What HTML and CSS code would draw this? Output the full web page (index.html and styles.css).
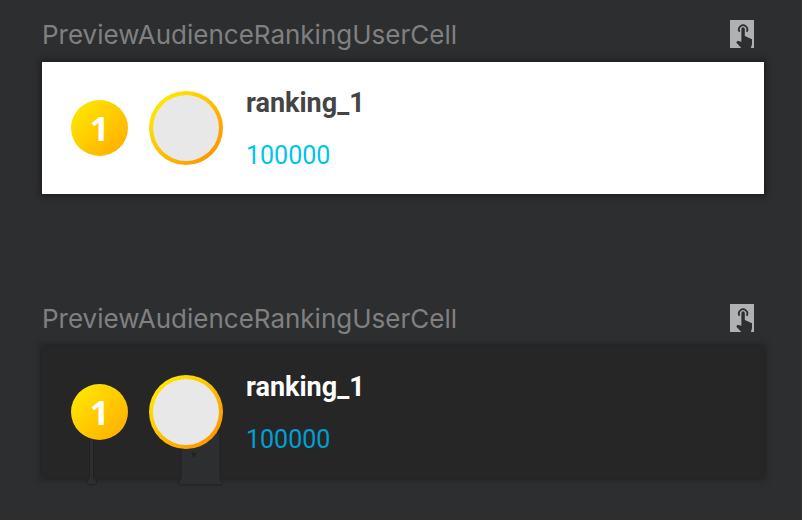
FILE: index.html
```html
<!DOCTYPE html>
<html lang="en">
<head>
  <meta charset="UTF-8" />
  <title>PreviewAudienceRankingUserCell</title>
  <link rel="stylesheet" href="styles.css">
</head>
<body>
  <section class="preview">
    <header class="preview-header">
      <h2>PreviewAudienceRankingUserCell</h2>
      <button class="interactive" aria-label="Interactive mode">
        <svg viewBox="0 0 24 28" width="24" height="28">
          <path d="M9.600 11.800a4.200 4.200 0 1 1 7 0" fill="none" stroke="#2d2e30" stroke-width="1.800" />
          <path d="M11.400 9a1.700 1.700 0 0 1 3.400 0v7l7.200 3.200v5l-1.200 3.800h-9.500L6.200 22.400l1.500-1.600 3.700 1z" fill="#2d2e30" />
        </svg>
      </button>
    </header>
    <div class="cell">
      <div class="rank">1</div>
      <div class="avatar"></div>
      <div class="info">
        <div class="name">ranking_1</div>
        <div class="score">100000</div>
      </div>
    </div>
  </section>

  <section class="preview">
    <header class="preview-header">
      <h2>PreviewAudienceRankingUserCell</h2>
      <button class="interactive" aria-label="Interactive mode">
        <svg viewBox="0 0 24 28" width="24" height="28">
          <path d="M9.600 11.800a4.200 4.200 0 1 1 7 0" fill="none" stroke="#2d2e30" stroke-width="1.800" />
          <path d="M11.400 9a1.700 1.700 0 0 1 3.400 0v7l7.200 3.200v5l-1.200 3.800h-9.500L6.200 22.400l1.500-1.600 3.700 1z" fill="#2d2e30" />
        </svg>
      </button>
    </header>
    <div class="cell dark">
      <!-- background showing through under the circles -->
      <svg class="cutouts" viewBox="0 0 200 60" width="200" height="60">
        <path d="M47.500 0h4v46l3 3v2l-3 2h-4l-3-2v-2l3-3z" />
        <path d="M139 0h39v47l3 4-2 2h-40l-3-2 3-5z" />
        <path class="speck" d="M150 21h4l-2 4z" />
      </svg>
      <div class="rank">1</div>
      <div class="avatar"></div>
      <div class="info">
        <div class="name">ranking_1</div>
        <div class="score">100000</div>
      </div>
    </div>
  </section>
</body>
</html>
```

FILE: styles.css
```css
body {
  margin: 0;
  padding: 20px 38px 42px 42px;
  background: #2d2e30;
  font-family: Roboto, sans-serif;
}

.preview {
  margin-bottom: 110px;
}

.preview:last-child {
  margin-bottom: 0;
}

.preview-header {
  display: flex;
  justify-content: space-between;
  align-items: flex-start;
  padding-right: 10px;
  margin-bottom: 12px;
}

h2 {
  margin: 0;
  color: #808080;
  font-family: Inter, sans-serif;
  font-size: 26px;
  font-weight: 400;
  line-height: 30px;
}

.interactive {
  display: block;
  padding: 0;
  border: none;
  background: #afb1b3;
}

.interactive svg {
  display: block;
}

.cell {
  position: relative;
  display: flex;
  align-items: center;
  height: 132px;
  padding-left: 29px;
  background: #ffffff;
  box-shadow: 0 0 6px 2px #1d1d1e;
}

.rank {
  position: relative;
  width: 57px;
  margin-right: 21px;
  border-radius: 50%;
  background: linear-gradient(135deg, #ffe600 10%, #ffb000 90%);
  color: #ffffff;
  font-family: "Noto Sans", sans-serif;
  font-size: 34px;
  font-weight: 700;
  line-height: 56px;
  text-align: center;
}

.avatar {
  position: relative;
  box-sizing: border-box;
  width: 74px;
  height: 74px;
  margin-right: 23px;
  border: 4px solid transparent;
  border-radius: 50%;
  background: linear-gradient(#e8e8e8, #e8e8e8) padding-box,
    linear-gradient(135deg, #ffe600 15%, #ff9800 85%) border-box;
}

.info {
  padding-top: 3px;
}

.name {
  margin-bottom: 21px;
  color: #444444;
  font-size: 27px;
  font-weight: 700;
  line-height: 32px;
}

.score {
  color: #00c3f0;
  font-size: 25px;
  line-height: 32px;
}

.dark {
  background: #262626;
  box-shadow: 0 0 6px 1px #1d1d1e;
}

.dark .name {
  color: #ffffff;
}

.dark .score {
  color: #00a0d2;
}

.cutouts {
  position: absolute;
  left: 0;
  bottom: -14px;
  fill: #2d2e30;
  stroke: #212122;
}

.cutouts .speck {
  fill: #212122;
}
```
